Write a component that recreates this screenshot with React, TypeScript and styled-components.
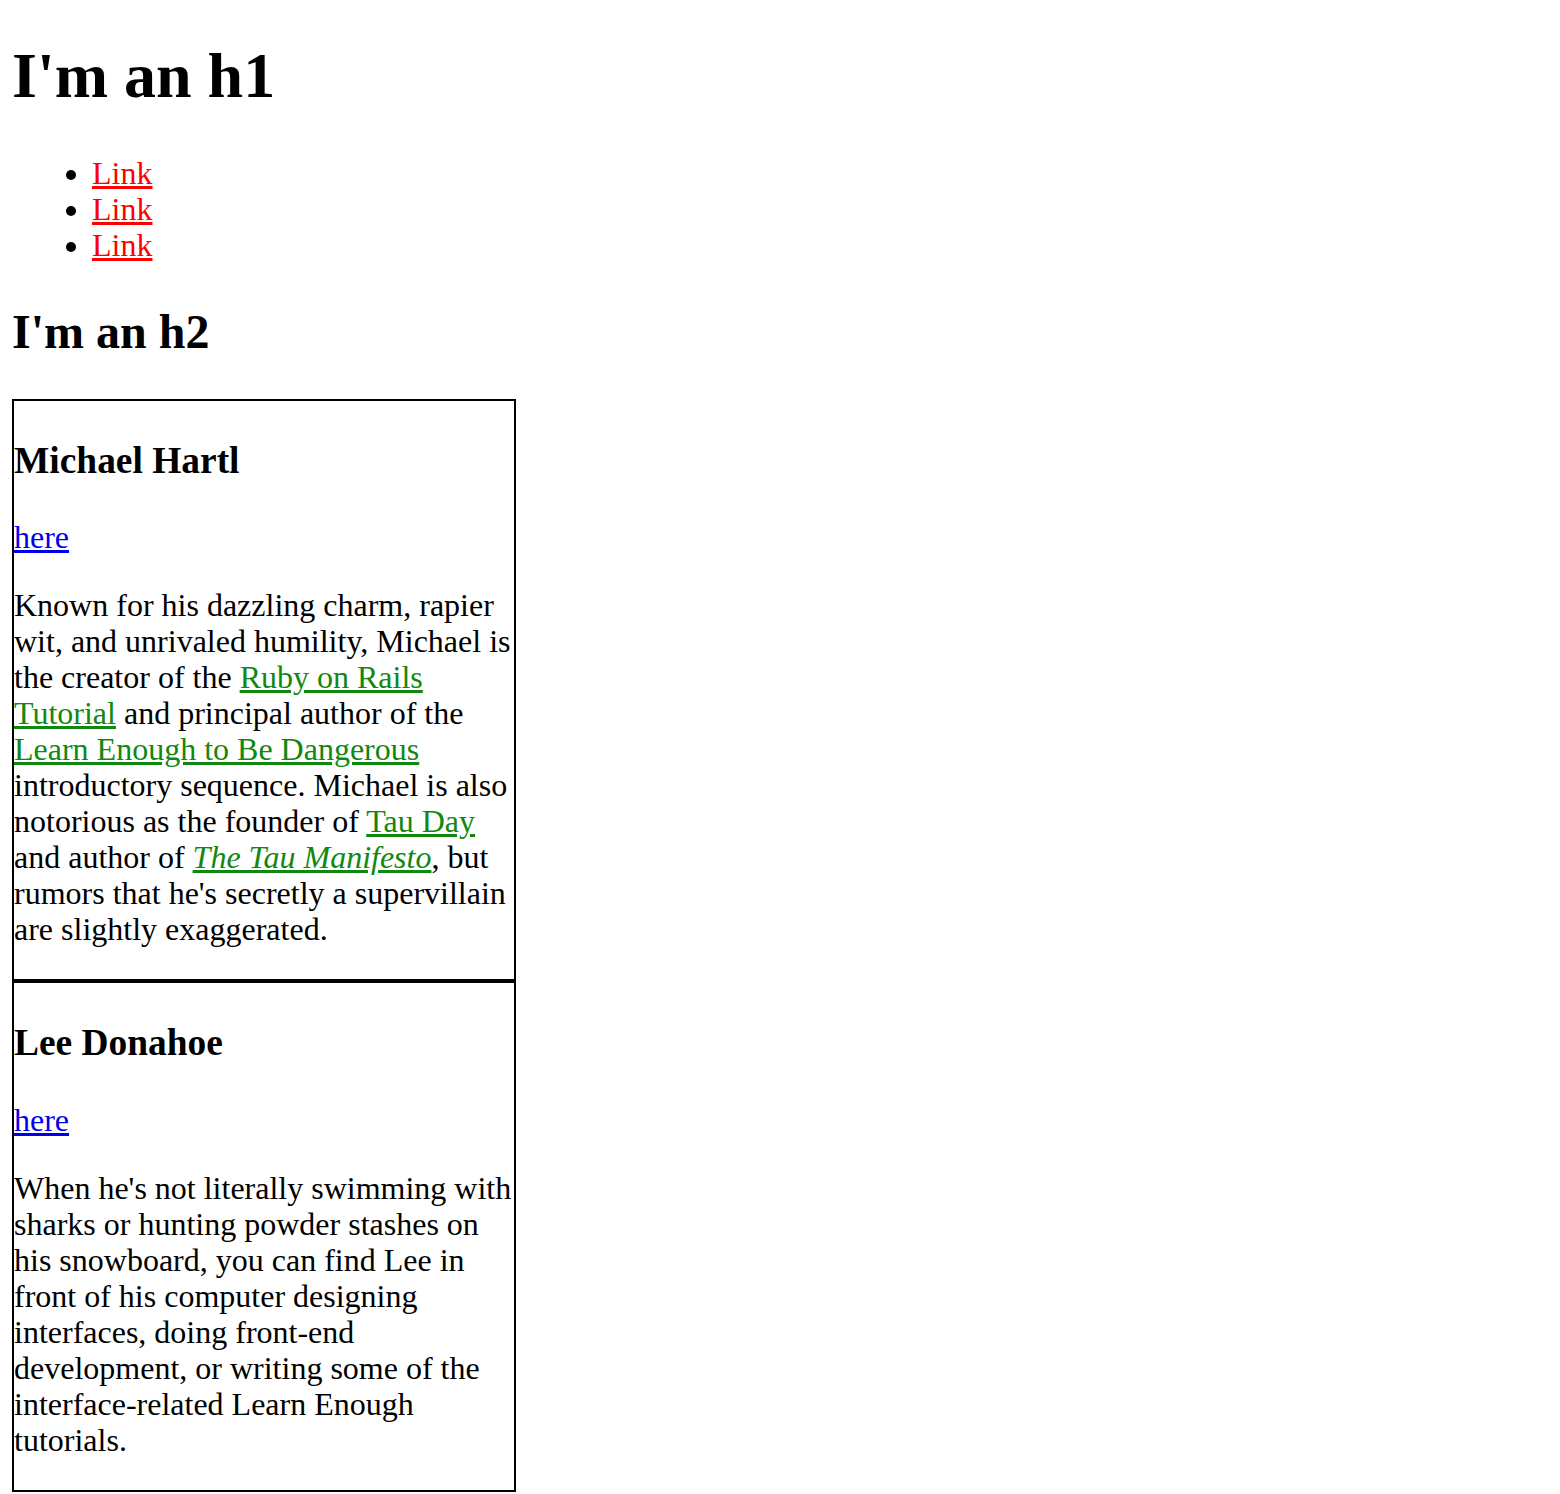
import React from 'react';
import styled, { createGlobalStyle } from 'styled-components';

const GlobalStyle = createGlobalStyle`
  html, body {
    margin: 0;
    padding: 0;
    background: #ffffff;
  }
  body {
    font-family: 'Liberation Serif', 'Times New Roman', serif;
    font-size: 32px;
    line-height: 1.125;
    color: #000000;
  }
`;

const Page = styled.div`
  padding: 0 12px;
  overflow: hidden;
`;

const Title = styled.h1`
  font-size: 64px;
  line-height: 72px;
  font-weight: 700;
  margin: 40px 0 43px;
`;

const NavList = styled.ul`
  margin: 0;
  padding-left: 80px;
  list-style: disc;
`;

const Subtitle = styled.h2`
  font-size: 48px;
  line-height: 54px;
  font-weight: 700;
  margin: 42px 0 40px;
`;

const Card = styled.div`
  width: 500px;
  border: 2px solid #000000;
`;

const Name = styled.h3`
  font-size: 37.44px;
  line-height: 42.5px;
  font-weight: 700;
  margin: 38.5px 0 37.44px;
`;

const Paragraph = styled.p`
  margin: 32px 0;
`;

const RedLink = styled.a`
  color: #ff0000;
  text-decoration: underline;
`;

const BlueLink = styled.a`
  color: #0000ee;
  text-decoration: underline;
`;

const GreenLink = styled.a`
  color: #118811;
  text-decoration: underline;
`;

type Bio = {
  name: string;
  body: React.ReactNode;
};

const bios: Bio[] = [
  {
    name: 'Michael Hartl',
    body: (
      <>
        Known for his dazzling charm, rapier wit, and unrivaled humility, Michael is the creator of the{' '}
        <GreenLink href='#'>Ruby on Rails Tutorial</GreenLink> and principal author of the{' '}
        <GreenLink href='#'>Learn Enough to Be Dangerous</GreenLink> introductory sequence. Michael is also
        notorious as the founder of <GreenLink href='#'>Tau Day</GreenLink> and author of{' '}
        <GreenLink href='#'>
          <em>The Tau Manifesto</em>
        </GreenLink>
        , but rumors that he's secretly a supervillain are slightly exaggerated.
      </>
    ),
  },
  {
    name: 'Lee Donahoe',
    body: (
      <>
        When he's not literally swimming with sharks or hunting powder stashes on his snowboard, you can find
        Lee in front of his computer designing interfaces, doing front-end development, or writing some of the
        interface-related Learn Enough tutorials.
      </>
    ),
  },
];

function BioCard({ name, body }: Bio) {
  return (
    <Card>
      <Name>{name}</Name>
      <Paragraph>
        <BlueLink href='#'>here</BlueLink>
      </Paragraph>
      <Paragraph>{body}</Paragraph>
    </Card>
  );
}

export default function App() {
  return (
    <>
      <GlobalStyle />
      <Page>
        <Title>I'm an h1</Title>
        <NavList>
          <li>
            <RedLink href='#'>Link</RedLink>
          </li>
          <li>
            <RedLink href='#'>Link</RedLink>
          </li>
          <li>
            <RedLink href='#'>Link</RedLink>
          </li>
        </NavList>
        <Subtitle>I'm an h2</Subtitle>
        {bios.map(bio => (
          <BioCard key={bio.name} name={bio.name} body={bio.body} />
        ))}
      </Page>
    </>
  );
}
